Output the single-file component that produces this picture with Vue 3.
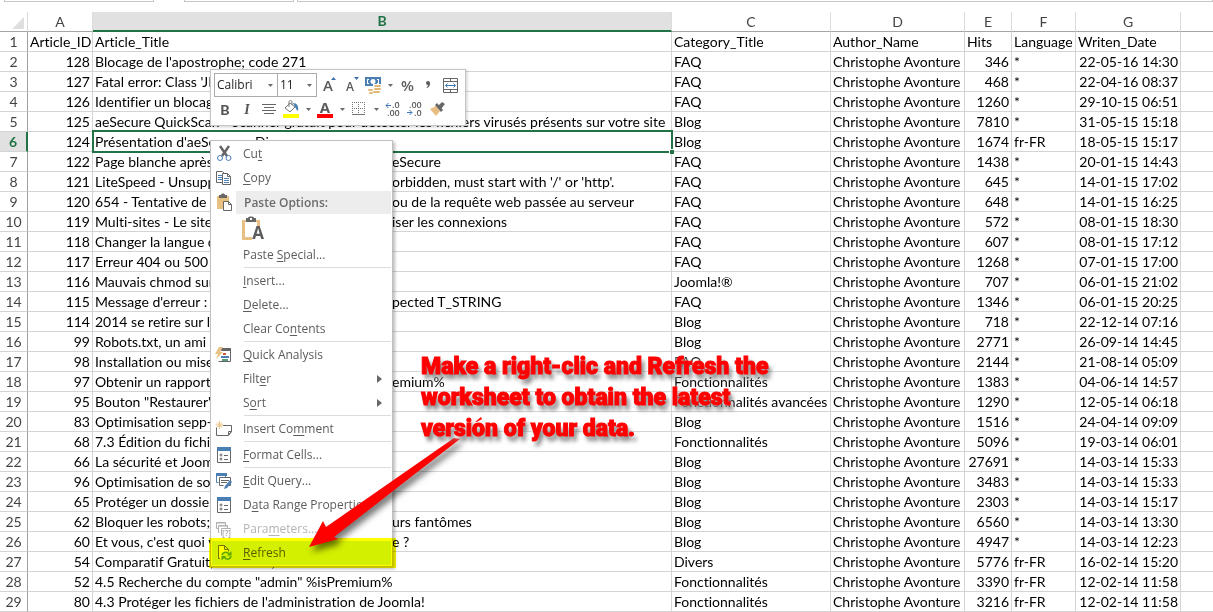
<script setup>
const letters = ['A', 'B', 'C', 'D', 'E', 'F', 'G']

const author = 'Christophe Avonture'
const F = 'Fonctionnalités'
// id, title, rest of title past the menu, category, hits, language, date
const articles = [
  [128, "Blocage de l'apostrophe; code 271", '', 'FAQ', 346, '*', '22-05-16 14:30'],
  [127, "Fatal error: Class 'JL", '', 'FAQ', 468, '*', '22-04-16 08:37'],
  [126, 'Identifier un blocag', '', 'FAQ', 1260, '*', '29-10-15 06:51'],
  [125, 'aeSecure QuickScan - Scanner gratuit pour détecter les fichiers virusés présents sur votre site', '', 'Blog', 7810, '*', '31-05-15 15:18'],
  [124, "Présentation d'aeSecure - Dis", '', 'Blog', 1674, 'fr-FR', '18-05-15 15:17'],
  [122, 'Page blanche après', 'eSecure', 'FAQ', 1438, '*', '20-01-15 14:43'],
  [121, 'LiteSpeed - Unsupp', "orbidden, must start with '/' or 'http'.", 'FAQ', 645, '*', '14-01-15 17:02'],
  [120, '654 - Tentative de r', 'ou de la requête web passée au serveur', 'FAQ', 648, '*', '14-01-15 16:25'],
  [119, 'Multi-sites - Le site', 'iser les connexions', 'FAQ', 572, '*', '08-01-15 18:30'],
  [118, 'Changer la langue d', '', 'FAQ', 607, '*', '08-01-15 17:12'],
  [117, 'Erreur 404 ou 500 a', '', 'FAQ', 1268, '*', '07-01-15 17:00'],
  [116, 'Mauvais chmod sur', '', 'Joomla!®', 707, '*', '06-01-15 21:02'],
  [115, "Message d'erreur :", 'pected T_STRING', 'FAQ', 1346, '*', '06-01-15 20:25'],
  [114, '2014 se retire sur la', '', 'Blog', 718, '*', '22-12-14 07:16'],
  [99, 'Robots.txt, un ami a', '', 'Blog', 2771, '*', '26-09-14 14:45'],
  [98, 'Installation ou mise', '', 'FAQ', 2144, '*', '21-08-14 05:09'],
  [97, 'Obtenir un rapport', 'emium%', F, 1383, '*', '04-06-14 14:57'],
  [95, 'Bouton "Restaurer"', '', F + ' avancées', 1290, '*', '12-05-14 06:18'],
  [83, 'Optimisation sepp-', '', 'Blog', 1516, '*', '24-04-14 09:09'],
  [68, '7.3 Édition du fichie', '', F, 5096, '*', '19-03-14 06:01'],
  [66, 'La sécurité et Jooml', '', 'Blog', 27691, '*', '14-03-14 15:33'],
  [96, 'Optimisation de son', '', 'Blog', 3483, '*', '14-03-14 15:33'],
  [65, 'Protéger un dossier', '', 'Blog', 2303, '*', '14-03-14 15:17'],
  [62, 'Bloquer les robots;', 'urs fantômes', 'Blog', 6560, '*', '14-03-14 13:30'],
  [60, "Et vous, c'est quoi v", 'e ?', 'Blog', 4947, '*', '14-03-14 12:23'],
  [54, 'Comparatif Gratuit, Premium,', '', 'Divers', 5776, 'fr-FR', '16-02-14 15:20'],
  [52, '4.5 Recherche du compte "admin" %isPremium%', '', F, 3390, 'fr-FR', '12-02-14 11:58'],
  [80, "4.3 Protéger les fichiers de l'administration de Joomla!", '', F, 3216, 'fr-FR', '12-02-14 11:58'],
]

// text before the access key, the key, text after it
const menu = [
  { t: ['Cu', 't', ''], icon: 'cut' },
  { t: ['', 'C', 'opy'], icon: 'copy' },
  { t: ['Paste Options:', '', ''], icon: 'paste', kind: 'heading' },
  { kind: 'gallery' },
  { t: ['Paste ', 'S', 'pecial...'] },
  { kind: 'sep' },
  { t: ['', 'I', 'nsert...'] },
  { t: ['', 'D', 'elete...'] },
  { t: ['Clear Co', 'n', 'tents'] },
  { kind: 'sep' },
  { t: ['', 'Q', 'uick Analysis'], icon: 'quick' },
  { t: ['Filt', 'e', 'r'], sub: true },
  { t: ['S', 'o', 'rt'], sub: true },
  { kind: 'sep' },
  { t: ['Insert Co', 'm', 'ment'], icon: 'comment' },
  { kind: 'sep' },
  { t: ['', 'F', 'ormat Cells...'], icon: 'form' },
  { kind: 'sep' },
  { t: ['', 'E', 'dit Query...'], icon: 'query' },
  { t: ['D', 'a', 'ta Range Properties'], icon: 'form' },
  { t: ['Para', 'm', 'eters...'], icon: 'params', disabled: true },
  { t: ['', 'R', 'efresh'], icon: 'refresh', marked: true },
]
</script>

<template>
  <main class="sheet">
    <div class="formula-bar"><span class="name-box"></span><span class="fx"></span><span class="formula"></span></div>

    <table class="grid">
      <colgroup>
        <col class="c-row" /><col class="c-a" /><col class="c-b" /><col class="c-c" /><col class="c-d" />
        <col class="c-e" /><col class="c-f" /><col class="c-g" /><col class="c-h" />
      </colgroup>
      <thead>
        <tr>
          <th class="corner"><svg width="12" height="12" viewBox="0 0 12 12"><path d="M12 0V12H0z" fill="#dfdfdf" /></svg></th>
          <th v-for="l in letters" :key="l" scope="col" :class="{ active: l === 'B' }">{{ l }}</th>
          <th></th>
        </tr>
      </thead>
      <tbody>
        <tr>
          <th scope="row">1</th>
          <td>Article_ID</td><td>Article_Title</td><td>Category_Title</td><td>Author_Name</td>
          <td>Hits</td><td>Language</td><td>Writen_Date</td><td></td>
        </tr>
        <tr v-for="(a, i) in articles" :key="a[0]">
          <th scope="row" :class="{ active: i === 4 }">{{ i + 2 }}</th>
          <td class="num">{{ a[0] }}</td>
          <td :class="{ selected: i === 4 }"><span :class="{ lead: a[2] }">{{ a[1] }}</span>{{ a[2] }}</td>
          <td>{{ a[3] }}</td>
          <td>{{ author }}</td>
          <td class="num">{{ a[4] }}</td>
          <td>{{ a[5] }}</td>
          <td class="num">{{ a[6] }}</td>
          <td></td>
        </tr>
      </tbody>
    </table>

    <div class="mini" role="toolbar" aria-label="Formatting">
      <div class="tools">
        <span class="pick font">
          <select aria-label="Font"><option>Calibri</option></select>
          <svg class="caret" width="5" height="3" viewBox="0 0 5 3"><path d="M0 0h5L2.500 3z" fill="#6a6a6a" /></svg>
        </span>
        <span class="pick size">
          <select aria-label="Font size"><option>11</option></select>
          <svg class="caret" width="5" height="3" viewBox="0 0 5 3"><path d="M0 0h5L2.500 3z" fill="#6a6a6a" /></svg>
        </span>
        <button aria-label="Increase font size" class="first">
          <svg width="18" height="18"><text x="3" y="15" class="ga">A</text><path d="M11 4L13.500 1L16 4z" fill="#3d73a8" /></svg>
        </button>
        <button aria-label="Decrease font size">
          <svg width="18" height="18"><text x="4" y="15" class="gs">A</text><path d="M12 1h5L14.500 4z" fill="#3d73a8" /></svg>
        </button>
        <button aria-label="Accounting number format">
          <svg width="18" height="18">
            <path d="M1 1h16v9H1z" fill="#4b7fb4" /><path d="M3 3h2v1H4v3h1v1H3zM13 3h2v5h-2V7h1V4h-1z" fill="#fff" /><circle cx="9" cy="5.500" r="2.500" fill="#fff" />
            <path d="M9 8h9v10H4v-5h5z" fill="#fff" />
            <g fill="#e3b878"><rect x="10" y="9" width="7" height="2" rx="1" /><rect x="10" y="12" width="7" height="2" rx="1" /><rect x="9" y="15" width="7" height="2" rx="1" /><rect x="4" y="13" width="5" height="2" rx="1" /><rect x="5" y="16" width="4" height="2" rx="1" /></g>
          </svg>
        </button>
        <span class="drop"><svg width="5" height="3" viewBox="0 0 5 3"><path d="M0 0h5L2.500 3z" fill="#6a6a6a" /></svg></span>
        <button aria-label="Percent style"><svg width="18" height="18"><text x="3" y="15" class="pct">%</text></svg></button>
        <button aria-label="Comma style"><svg width="18" height="18"><circle cx="8" cy="7" r="2" fill="#5c5c5c" /><path d="M10 7c0 3-1 4-3 5l-.5-.8C8 10.500 8 9.500 8 8z" fill="#5c5c5c" /></svg></button>
        <button aria-label="Merge and center">
          <svg width="18" height="18" fill="none" stroke="#666"><path d="M1.500 2.500h14v14h-14zM1.500 5.500h14M1.500 13.500h14M8.500 2.500v3M8.500 13.500v3" /><path d="M3.500 9.500h10M5.500 7.500l-2 2l2 2M11.500 7.500l2 2l-2 2" stroke="#3f79b5" /></svg>
        </button>
      </div>
      <div class="tools">
        <button aria-label="Bold" class="bold">B</button>
        <button aria-label="Italic" class="italic">I</button>
        <button aria-label="Center"><svg width="18" height="18" stroke="#666"><path d="M2 4.500h14M4 7.500h10M2 10.500h14M4 13.500h10" /></svg></button>
        <button aria-label="Fill color">
          <svg width="18" height="18">
            <path d="M3 8L8 3L13 7L8 12z" fill="#fff" stroke="#777" /><path d="M7 7V2c0-2 3-2 3 0v3" fill="none" stroke="#777" /><path d="M11 3c4 0 6 3 5 8c-2-1-2-3-3-4z" fill="#4b7fb4" /><path d="M1 14h16v4H1z" fill="#ff0" />
          </svg>
        </button>
        <span class="drop"><svg width="5" height="3" viewBox="0 0 5 3"><path d="M0 0h5L2.500 3z" fill="#6a6a6a" /></svg></span>
        <button aria-label="Font color"><svg width="18" height="18"><text x="9" y="13" text-anchor="middle" class="fc">A</text><path d="M1 14h16v4H1z" fill="#f00" /></svg></button>
        <span class="drop"><svg width="5" height="3" viewBox="0 0 5 3"><path d="M0 0h5L2.500 3z" fill="#6a6a6a" /></svg></span>
        <button aria-label="Borders"><svg width="18" height="18" fill="none" stroke="#777"><path d="M2 2.500h13M2 8.500h13M2.500 2v12M8.500 2v12M14.500 2v12" stroke-dasharray="1 1" /><path d="M2 14.500h13" /></svg></button>
        <span class="drop"><svg width="5" height="3" viewBox="0 0 5 3"><path d="M0 0h5L2.500 3z" fill="#6a6a6a" /></svg></span>
        <button aria-label="Increase decimal"><svg width="18" height="18"><path d="M2 5.500h5M4.500 3L2 5.500L4.500 8" fill="none" stroke="#3f79b5" /><text x="8" y="8" class="dec">.0</text><text x="3" y="16" class="dec">.00</text></svg></button>
        <button aria-label="Decrease decimal"><svg width="18" height="18"><path d="M1 12.500h5M3.500 10L6 12.500L3.500 15" fill="none" stroke="#3f79b5" /><text x="3" y="8" class="dec">.00</text><text x="8" y="16" class="dec">.0</text></svg></button>
        <button aria-label="Format painter"><svg width="18" height="18"><path d="M2 9L8 6l4 5l-4 5z" fill="#e8be83" /><path d="M7 5l2-2l6 7l-2 2z" fill="#666" /><path d="M10 6L14 2l3 2l-4 5z" fill="#666" /></svg></button>
      </div>
    </div>

    <ul class="menu" role="menu">
      <li v-for="(m, i) in menu" :key="i" role="none" :class="[m.kind || 'item', { marked: m.marked }]">
        <hr v-if="m.kind === 'sep'" />
        <button v-else-if="m.kind === 'gallery'" role="menuitem" aria-label="Keep text only">
          <svg width="24" height="24">
            <path d="M0 3h18v20H0z" fill="#e8c082" /><path d="M3 5h12v15H3z" fill="#fff" /><path d="M4 1h2c0-2 6-2 6 0h2v4H4z" fill="#666" /><path d="M8 1h2v2H8z" fill="#fff" />
            <path d="M10 9h12v15H10z" fill="#fff" /><text x="16" y="22" text-anchor="middle" class="pa">A</text>
          </svg>
        </button>
        <button v-else role="menuitem" :disabled="m.disabled">
          <span class="ico">
            <svg v-if="m.icon === 'cut'" width="18" height="18" fill="none"><path d="M5 1l7 10M14 1L7 11" stroke="#666" stroke-width="2.500" /><circle cx="5" cy="13" r="2.500" stroke="#4b7fb4" /><circle cx="13.500" cy="13" r="2.500" stroke="#4b7fb4" /></svg>
            <svg v-else-if="m.icon === 'copy'" width="18" height="18" stroke="#666" fill="#fff"><path d="M1.500 2.500h6l3 3v8h-9z" /><path d="M3 6.500h4M3 8.500h4M3 10.500h4" stroke="#4b7fb4" /><path d="M7.500 4.500h5l3 3v8h-8zM12.500 4.500v3h3" /><path d="M9 9.500h5M9 11.500h5M9 13.500h5" stroke="#4b7fb4" /></svg>
            <svg v-else-if="m.icon === 'paste'" width="18" height="18"><path d="M2 3h12v13H2z" fill="#e8c082" /><path d="M4 2h2c0-2 4-2 4 0h2v3H4z" fill="#666" /><path d="M8.500 8.500h5l3 3v6h-8z" fill="#fff" stroke="#666" /><path d="M13.500 8.500v3h3" fill="none" stroke="#666" /></svg>
            <svg v-else-if="m.icon === 'quick'" width="18" height="18"><path d="M5.500 3.500h10v12h-12" fill="#fff" stroke="#666" /><path d="M7 2h9v3H6z" fill="#666" /><path d="M8 7h3v2H8z" fill="#d45a37" /><path d="M6 10h8v2H6z" fill="#4b7fb4" /><path d="M7 13h6v2H7z" fill="#5b9b81" /><path d="M4 1h4L5 6h3L1 13L3 8H0z" fill="#e8c082" /></svg>
            <svg v-else-if="m.icon === 'comment'" width="18" height="18" fill="none"><path d="M8 5.500h8.500v6l-3 4h-12v-8" stroke="#666" /><path d="M13.500 15v-3.500h3z" stroke="#666" /><path d="M4.500 1v8M.5 5h8M2 2.500l5 5M7 2.500l-5 5" stroke="#e8c082" /></svg>
            <svg v-else-if="m.icon === 'form'" width="18" height="18" fill="none"><path d="M2.500 2.500h13v14h-13z" stroke="#666" fill="#fff" /><path d="M2 1h14v4H2z" fill="#4b7fb4" /><circle cx="6" cy="9" r="1" stroke="#666" /><circle cx="6" cy="13" r="1" stroke="#666" /><path d="M9 9.500h4M9 13.500h4" stroke="#666" /></svg>
            <svg v-else-if="m.icon === 'query'" width="18" height="18" fill="none"><path d="M3.500 10.500h-2v-8h9v3" stroke="#4b7fb4" /><path d="M1 1h11v3H1z" fill="#4b7fb4" /><path d="M4.500 5.500h11v8h-3M4.500 5.500v8h4" stroke="#666" /><path d="M6 8.500h8M6 10.500h6" stroke="#666" /><path d="M9 17l1-3l5-6l2 2l-5 6z" fill="#4b7fb4" /></svg>
            <svg v-else-if="m.icon === 'params'" width="18" height="18" fill="none" stroke="#b0b0b0"><path d="M3.500 8.500h-2v-6h9v3M1 3h10M4.500 12.500h-1v-7h9v3M4 6h9" /><path d="M6.500 15.500v-7h9v1" /><text x="7" y="16" class="q">[?]</text></svg>
            <svg v-else-if="m.icon === 'refresh'" width="18" height="18" fill="none"><path d="M3.500 14.500v-13h6v4h4v2l-7 2v5z" fill="#ff0" /><path d="M5 14.500H3.500v-13h6l4 4v2M9.500 1.500v4h4" stroke="#77752c" /><path d="M7 11c1-3 5-4 7-1M16 12c-1 4-5 4-7 1" stroke="#5da52c" stroke-width="1.500" /><path d="M16.500 7v4.500H12zM6.500 16.500V12H11z" fill="#5da52c" /></svg>
          </span>
          <span class="label">{{ m.t[0] }}<u>{{ m.t[1] }}</u>{{ m.t[2] }}</span>
          <svg v-if="m.sub" class="sub" width="5" height="8" viewBox="0 0 5 8"><path d="M0 0L5 4L0 8z" fill="#666" /></svg>
        </button>
      </li>
    </ul>

    <svg class="arrow" width="190" height="150" viewBox="0 0 190 150">
      <path d="M8 137L22 111L25 117L153 28L159 29L110 67L33 127L37 129zM174 12L180 7L181 9L176 12z" fill="#f00" />
    </svg>
    <p class="callout">Make a right-clic and Refresh the<br />worksheet to obtain the latest<br />version of your data.</p>
  </main>
</template>

<style>
body { background: #fff; }
</style>

<style scoped>
.sheet { position: relative; overflow: hidden; font: 14px/19px Lato, "Liberation Sans", sans-serif; font-variant-ligatures: none; color: #000; }
.formula-bar { display: flex; height: 12px; }
.formula-bar span { height: 1px; border: 1px solid #c6c6c6; border-top: 0; }
.name-box { width: 148px; margin-left: 4px; }
.fx { width: 108px; margin-left: 30px; }
.formula { flex: 1; margin-left: 3px; }

.grid { width: 100%; table-layout: fixed; border-collapse: separate; border-spacing: 0; }
.c-row { width: 28px; } .c-a { width: 65px; } .c-c { width: 159px; } .c-d { width: 134px; }
.c-e { width: 47px; } .c-f { width: 64px; } .c-g { width: 105px; } .c-h { width: 32px; }
td, th { height: 19px; box-sizing: content-box; padding: 0 2px; border: solid #d4d4d4; border-width: 0 1px 1px 0; white-space: nowrap; text-align: left; }
th { font-weight: 400; color: #444; text-align: center; padding: 0; }
thead th { border-bottom-color: #a6a6a6; border-right-color: #dcdcdc; }
tbody th { border-right-color: #a0a0a0; }
thead th:last-child, td:last-child { border-right: 0; }
.corner { text-align: right; }
.corner svg { display: block; margin: 2px 3px 0 auto; }
th.active { background: #e1e1e1; color: #217346; font-weight: 700; }
thead th.active { border-bottom: 2px solid #217346; height: 18px; line-height: 18px; }
tbody th.active { border-right: 2px solid #217346; }
.num { text-align: right; }
.lead { display: inline-block; width: 297px; }
.selected { position: relative; }
.selected::before { content: ""; position: absolute; inset: -2px -2px -2px -1px; border: 2px solid #217346; }
.selected::after { content: ""; position: absolute; right: -3px; bottom: -3px; width: 4px; height: 4px; background: #217346; border: 1px solid #fff; border-width: 1px 0 0 1px; }

button { display: flex; align-items: center; justify-content: center; border: 0; padding: 0; background: none; font: inherit; color: inherit; }
.mini { position: absolute; left: 210px; top: 69px; box-sizing: border-box; width: 256px; padding: 3px 3px 4px; border: 1px solid #c6c6c6; background: #fff; box-shadow: 1px 1px 3px #0003; color: #555; }
.tools { display: flex; height: 24px; align-items: center; }
.tools button { width: 22px; height: 24px; }
.tools .first { margin-left: 1px; }
.drop { width: 12px; display: flex; justify-content: center; }
.pick { position: relative; box-sizing: border-box; height: 24px; border: 1px solid #ababab; }
.pick.font { width: 64px; }
.pick.size { width: 40px; margin-left: -1px; }
.pick select { appearance: none; display: block; width: 100%; height: 22px; border: 0; padding: 0 2px; background: none; font: 12px/20px "Open Sans", "Noto Sans", sans-serif; color: #222; }
.caret { position: absolute; right: 4px; top: 10px; }
.bold { font-weight: 900; }
.tools .italic { font: italic 700 14px/19px "Liberation Serif", serif; }
svg { overflow: visible; }
svg text { font-family: "Open Sans", "Noto Sans", sans-serif; fill: #5c5c5c; stroke: none; }
.ga { font-size: 15px; font-weight: 600; }
.gs { font-size: 12px; font-weight: 600; }
.pct { font-size: 15px; font-weight: 600; }
.fc { font-size: 15px; font-weight: 700; }
.dec { font-size: 9px; font-weight: 600; }
.pa { font-size: 17px; font-weight: 700; }
svg text.q { font-size: 8px; font-weight: 600; fill: #a8a8a8; }

.menu { position: absolute; left: 210px; top: 140px; box-sizing: border-box; width: 183px; margin: 0; padding: 1px; border: 1px solid #c0c0c0; background: #fff; box-shadow: 2px 2px 3px #0004; list-style: none; font: 12px/24px "Open Sans", "Noto Sans", sans-serif; color: #5c5c5c; }
.menu button { width: 100%; height: 24px; justify-content: flex-start; }
.menu button:disabled { color: #b4b4b4; }
.ico { display: flex; width: 24px; padding-left: 3px; }
.label { flex: 1; padding-left: 4px; text-align: left; }
.label u { text-underline-offset: 2px; }
.heading .label { height: 23px; line-height: 23px; background: #ededed; margin-left: -3px; padding-left: 8px; font-weight: 600; color: #6c6c6c; }
.gallery button { height: 29px; padding-left: 30px; }
.sep { height: 2px; padding-left: 32px; }
.sep hr { margin: 0; border: 0; height: 1px; background: #dcdcdc; }
.sub { margin-right: 9px; }
.marked { position: relative; }
.marked::after { content: ""; position: absolute; inset: -3px -5px -3px -3px; background: #ff0; mix-blend-mode: multiply; }
.marked button { background: #d3f000; }

.arrow { position: absolute; left: 301px; top: 410px; filter: drop-shadow(3px 5px 3px #0008); }
.callout { position: absolute; left: 421px; top: 351px; margin: 0; white-space: nowrap; font: 900 23px/31px Impact, Roboto, sans-serif; color: #f00; -webkit-text-stroke: 1px #f00; text-shadow: 3px 5px 4px #0008, 0 0 4px #fff, 2px 4px 6px #fff; }
</style>
